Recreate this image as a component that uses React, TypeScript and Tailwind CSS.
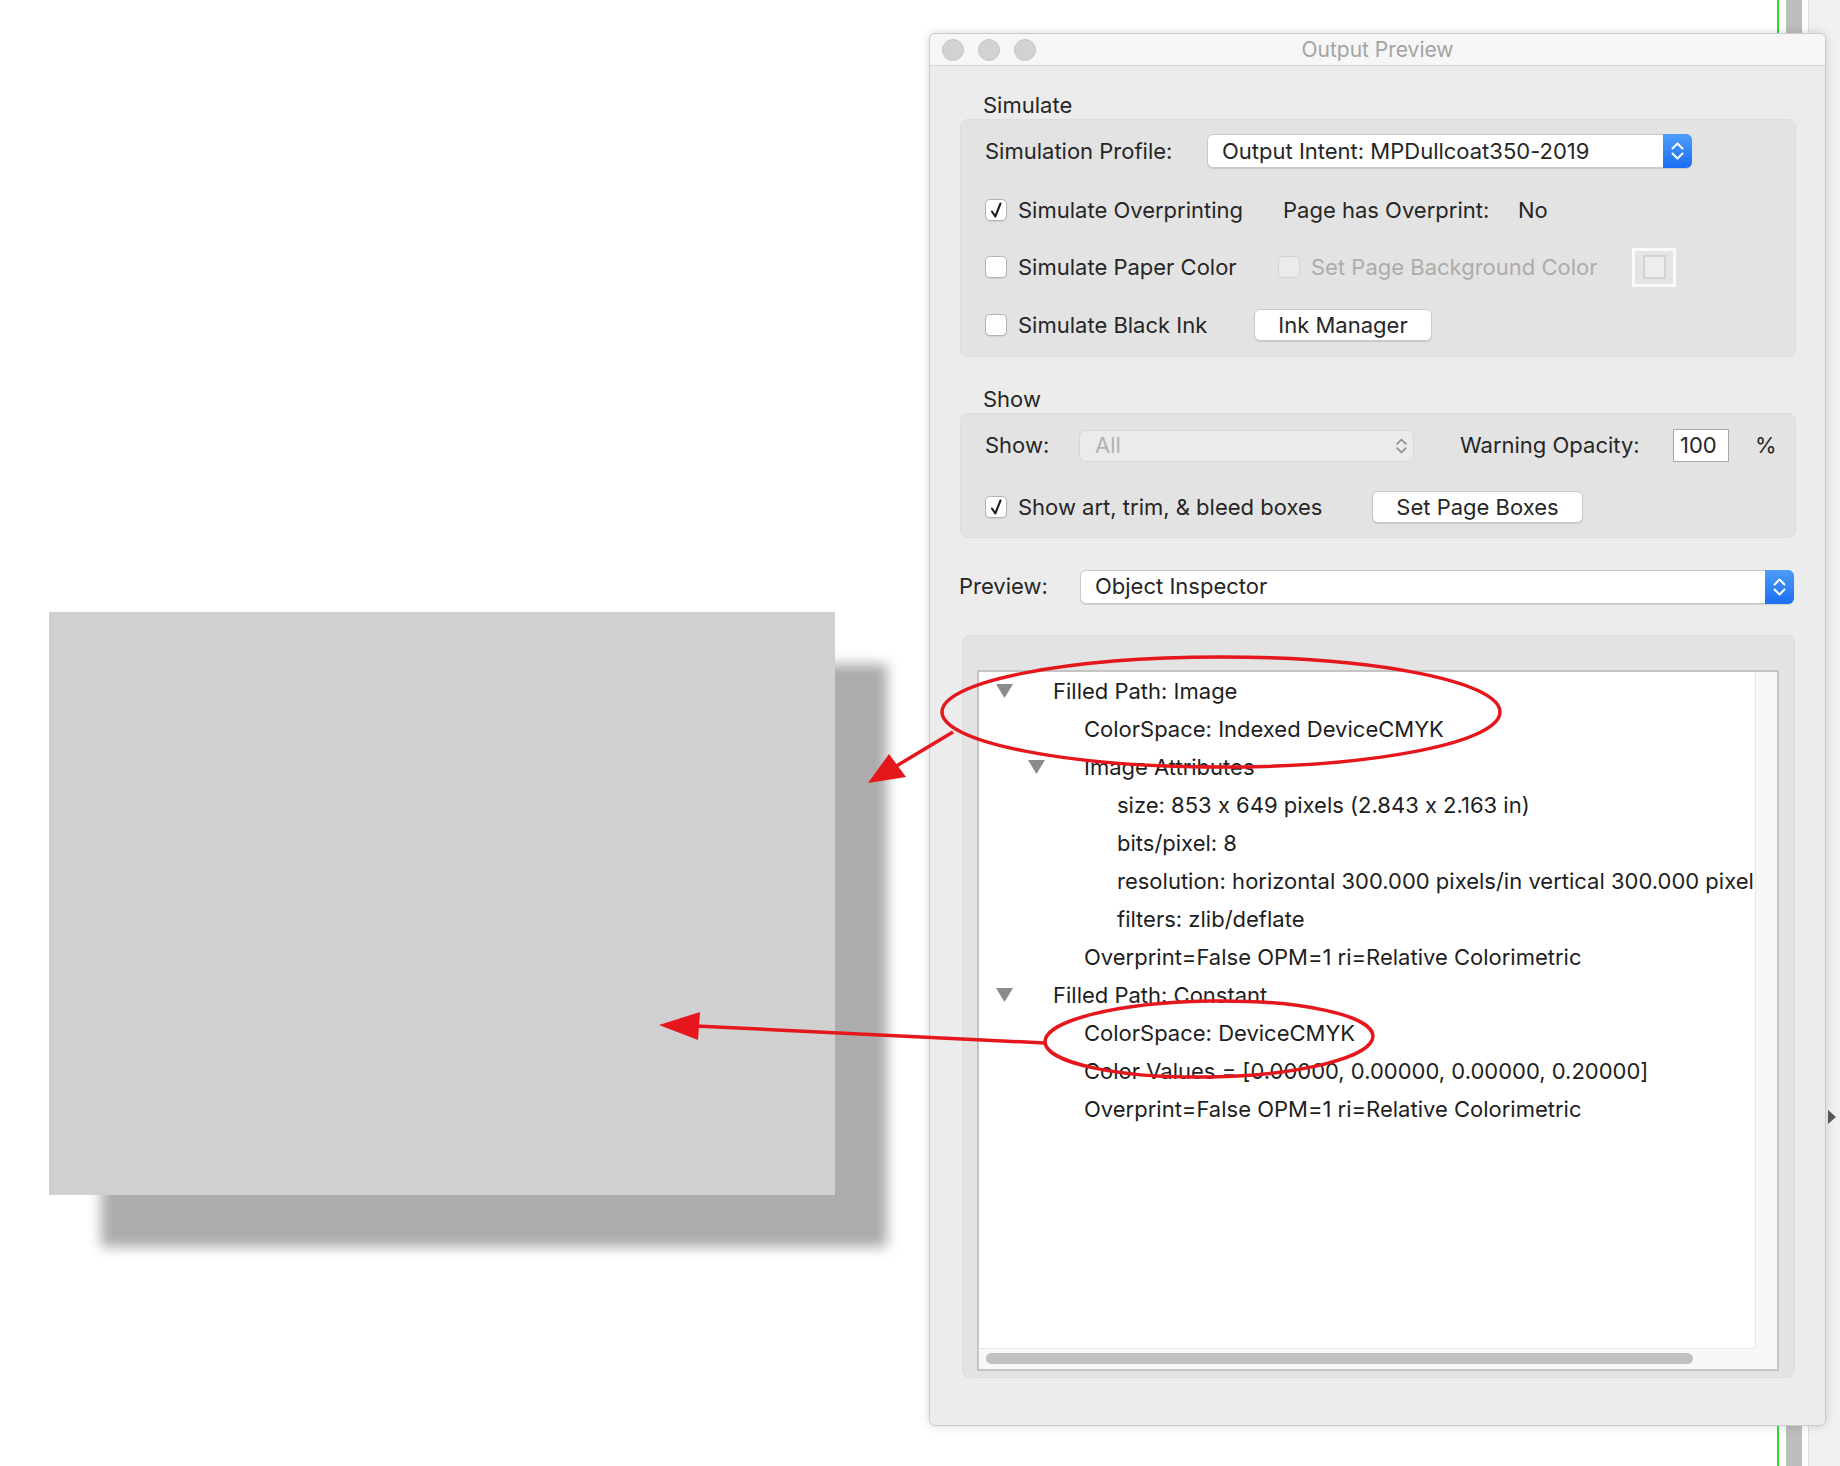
import React from 'react';

const ui = "font-['Inter','Noto_Sans',sans-serif] [font-feature-settings:'calt'_0]";

type Row = { level: number; open?: boolean; text: string };

const treeRows: Row[] = [
  { level: 0, open: true, text: 'Filled Path: Image' },
  { level: 1, text: 'ColorSpace: Indexed DeviceCMYK' },
  { level: 1, open: true, text: 'Image Attributes' },
  { level: 2, text: 'size: 853 x 649 pixels (2.843 x 2.163 in)' },
  { level: 2, text: 'bits/pixel: 8' },
  { level: 2, text: 'resolution: horizontal 300.000 pixels/in vertical 300.000 pixels/in' },
  { level: 2, text: 'filters: zlib/deflate' },
  { level: 1, text: 'Overprint=False OPM=1 ri=Relative Colorimetric' },
  { level: 0, open: true, text: 'Filled Path: Constant' },
  { level: 1, text: 'ColorSpace: DeviceCMYK' },
  { level: 1, text: 'Color Values = [0.00000, 0.00000, 0.00000, 0.20000]' },
  { level: 1, text: 'Overprint=False OPM=1 ri=Relative Colorimetric' },
];

const indents = [
  'w-[74px] pl-[17px]',
  'w-[105px] pl-[49px]',
  'w-[138px] pl-[81px]',
];

function Chevrons({ color, small }: { color: string; small?: boolean }) {
  return (
    <svg width={small ? 13 : 15} height="22" viewBox="0 0 15 22" fill="none">
      <path d="M2.5 8.5 L7.5 3.5 L12.5 8.5" stroke={color} strokeWidth="2" strokeLinecap="round" strokeLinejoin="round" />
      <path d="M2.5 13.5 L7.5 18.5 L12.5 13.5" stroke={color} strokeWidth="2" strokeLinecap="round" strokeLinejoin="round" />
    </svg>
  );
}

function Checkbox({ checked, disabled }: { checked?: boolean; disabled?: boolean }) {
  return (
    <div
      className={`w-[22px] h-[22px] rounded-[5px] border flex items-center justify-center shrink-0 ${
        disabled ? 'bg-[#ebebeb] border-[#d3d3d3]' : 'bg-white border-[#b3b3b3] shadow-[0_1px_1px_rgba(0,0,0,0.08)]'
      }`}
    >
      {checked && (
        <svg width="18" height="20" viewBox="0 0 18 20" fill="none">
          <path d="M5 11.5 L8.3 16.5 L13.5 3.5" stroke="#1f1f1f" strokeWidth="2.1" strokeLinecap="round" strokeLinejoin="round" />
        </svg>
      )}
    </div>
  );
}

function CheckItem({ label, checked, disabled, width }: { label: string; checked?: boolean; disabled?: boolean; width: string }) {
  return (
    <div className={`flex items-center gap-[11px] ${width}`}>
      <Checkbox checked={checked} disabled={disabled} />
      <span className={disabled ? 'text-[#acacac]' : 'text-[#262626]'}>{label}</span>
    </div>
  );
}

function PushButton({ label, width }: { label: string; width: string }) {
  return (
    <div className={`h-[32px] ${width} bg-white rounded-[6px] border border-[#cacaca] shadow-[0_1px_1px_rgba(0,0,0,0.12)] flex items-center justify-center text-[#262626]`}>
      {label}
    </div>
  );
}

function PopUp({ value, width }: { value: string; width: string }) {
  return (
    <div className={`h-[34px] ${width} flex bg-white rounded-[6px] border border-[#c9c9c9] shadow-[0_1px_1px_rgba(0,0,0,0.12)]`}>
      <div className="flex-1 flex items-center pl-[14px] text-[#262626] whitespace-nowrap">{value}</div>
      <div className="w-[29px] -my-px -mr-px rounded-r-[6px] bg-gradient-to-b from-[#4d9cfb] to-[#1a6ef1] flex items-center justify-center">
        <Chevrons color="#ffffff" />
      </div>
    </div>
  );
}

function GroupBox({ children, className }: { children: React.ReactNode; className: string }) {
  return <div className={`bg-[#e3e3e3] rounded-[8px] border border-[#dddddd] ${className}`}>{children}</div>;
}

function TreeRow({ row }: { row: Row }) {
  return (
    <div className="h-[38px] flex items-center whitespace-nowrap">
      <div className={`${indents[row.level]} shrink-0 flex items-center`}>
        {row.open && (
          <svg width="17" height="14" viewBox="0 0 17 14">
            <polygon points="0,0 17,0 8.5,14" fill="#8b8b8b" />
          </svg>
        )}
      </div>
      <span className="text-[#1e1e1e]">{row.text}</span>
    </div>
  );
}

function Annotations() {
  return (
    <svg className="absolute inset-0 pointer-events-none" width="1840" height="1466" viewBox="0 0 1840 1466" fill="none">
      <ellipse cx="1221" cy="712" rx="279" ry="55" stroke="#e5161c" strokeWidth="3.5" />
      <line x1="953" y1="732" x2="893" y2="768" stroke="#e5161c" strokeWidth="3.5" />
      <polygon points="868,783 889,754 906,777" fill="#e5161c" />
      <ellipse cx="1209" cy="1039" rx="164" ry="38" transform="rotate(-1 1209 1039)" stroke="#e5161c" strokeWidth="3.5" />
      <line x1="696" y1="1026" x2="1045" y2="1043" stroke="#e5161c" strokeWidth="3.5" />
      <polygon points="659,1025 700,1012 698,1040" fill="#e5161c" />
    </svg>
  );
}

export default function App() {
  return (
    <div className={`relative w-[1840px] h-[1466px] bg-white overflow-hidden flex items-start text-[22px] ${ui}`}>
      {/* background strips behind the window */}
      <div className="absolute top-0 bottom-0 left-[1777px] w-[2px] bg-[#2ddf2d]" />
      <div className="absolute top-0 bottom-0 left-[1786px] w-[16px] bg-[#bdbdbd]" />
      <div className="absolute top-0 bottom-0 left-[1808px] right-0 bg-[#f1f1f1] border-l border-[#dddddd]" />
      <div className="absolute left-[1828px] top-[1110px] w-0 h-0 border-y-[7px] border-y-transparent border-l-[8px] border-l-[#5a5a5a]" />

      {/* page preview */}
      <div className="w-[929px] shrink-0 pl-[49px] pt-[612px]">
        <div className="w-[786px] h-[583px] bg-[#d0d0d0] shadow-[52px_52px_12px_#acacac]" />
      </div>

      {/* Output Preview window */}
      <div className="relative mt-[33px] w-[897px] h-[1393px] shrink-0 bg-[#ececec] rounded-[6px] border border-[#cbcbcb] shadow-[0_0_10px_rgba(0,0,0,0.16)] flex flex-col overflow-hidden">
        <div className="h-[32px] bg-[#f6f6f6] border-b border-[#d6d6d6] relative flex items-center pl-[12px] gap-[14px] shrink-0">
          <div className="w-[22px] h-[22px] rounded-full bg-[#d2d2d2] border border-[#c6c6c6]" />
          <div className="w-[22px] h-[22px] rounded-full bg-[#d2d2d2] border border-[#c6c6c6]" />
          <div className="w-[22px] h-[22px] rounded-full bg-[#d2d2d2] border border-[#c6c6c6]" />
          <div className="absolute inset-0 flex items-center justify-center text-[21px] text-[#a3a3a3]">Output Preview</div>
        </div>

        {/* Simulate */}
        <div className="mt-[27px] h-[24px] leading-[24px] pl-[53px] text-[#262626]">Simulate</div>
        <GroupBox className="mt-[2px] ml-[30px] w-[836px] h-[238px] pt-[14px] pl-[24px] flex flex-col">
          <div className="h-[34px] flex items-center">
            <span className="w-[222px] text-[#262626]">Simulation Profile:</span>
            <PopUp value="Output Intent: MPDullcoat350-2019" width="w-[485px]" />
          </div>
          <div className="mt-[25px] h-[34px] flex items-center">
            <CheckItem label="Simulate Overprinting" checked width="w-[298px]" />
            <span className="w-[235px] text-[#262626]">Page has Overprint:</span>
            <span className="text-[#262626]">No</span>
          </div>
          <div className="mt-[20px] h-[40px] flex items-center">
            <CheckItem label="Simulate Paper Color" width="w-[293px]" />
            <CheckItem label="Set Page Background Color" disabled width="w-[354px]" />
            <div className="w-[44px] h-[39px] border-[3px] border-[#fafafa] bg-[#e5e5e5] flex items-center justify-center">
              <div className="w-[23px] h-[24px] border-2 border-[#d3d3d3] bg-[#ededed]" />
            </div>
          </div>
          <div className="mt-[22px] h-[32px] flex items-center">
            <CheckItem label="Simulate Black Ink" width="w-[269px]" />
            <PushButton label="Ink Manager" width="w-[178px]" />
          </div>
        </GroupBox>

        {/* Show */}
        <div className="mt-[30px] h-[24px] leading-[24px] pl-[53px] text-[#262626]">Show</div>
        <GroupBox className="mt-[2px] ml-[30px] w-[836px] h-[125px] pt-[15px] pl-[24px] flex flex-col">
          <div className="h-[33px] flex items-center">
            <span className="w-[94px] text-[#262626]">Show:</span>
            <div className="w-[335px] h-[32px] rounded-[6px] bg-[#ebebeb] border border-[#d6d6d6] flex items-center justify-between pl-[15px] pr-[5px]">
              <span className="text-[#b2b2b2]">All</span>
              <Chevrons color="#8f8f8f" small />
            </div>
            <span className="ml-[46px] w-[213px] text-[#262626]">Warning Opacity:</span>
            <div className="w-[56px] h-[33px] bg-white border border-[#aaaaaa] flex items-center pl-[6px] text-[#262626]">100</div>
            <span className="ml-[26px] text-[#262626]">%</span>
          </div>
          <div className="mt-[29px] h-[32px] flex items-center">
            <CheckItem label="Show art, trim, & bleed boxes" checked width="w-[387px]" />
            <PushButton label="Set Page Boxes" width="w-[211px]" />
          </div>
        </GroupBox>

        {/* Preview */}
        <div className="mt-[32px] h-[33px] flex items-center pl-[29px]">
          <span className="w-[121px] text-[#262626]">Preview:</span>
          <PopUp value="Object Inspector" width="w-[714px]" />
        </div>

        {/* Object inspector tree */}
        <div className="mt-[32px] ml-[32px] w-[833px] h-[743px] bg-[#e3e3e3] rounded-[8px] border border-[#dddddd] pl-[14px] pt-[34px]">
          <div className="w-[802px] h-[701px] border-2 border-[#c4c4c4] grid grid-cols-[776px_22px] grid-rows-[676px_21px] bg-white">
            <div className="overflow-hidden">
              {treeRows.map((row, i) => (
                <TreeRow key={i} row={row} />
              ))}
            </div>
            <div className="bg-[#f8f8f8] border-l border-[#e6e6e6]" />
            <div className="bg-[#f8f8f8] border-t border-[#e6e6e6] pl-[7px] pt-[4px]">
              <div className="w-[707px] h-[11px] rounded-full bg-[#c1c1c1]" />
            </div>
            <div className="bg-[#f8f8f8]" />
          </div>
        </div>
      </div>

      <Annotations />
    </div>
  );
}
